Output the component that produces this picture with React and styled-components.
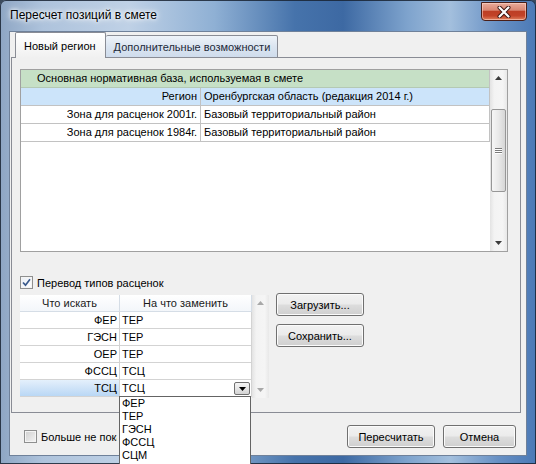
import React from "react";
import styled, { createGlobalStyle } from "styled-components";

const GlobalStyle = createGlobalStyle`
  html, body {
    margin: 0;
    padding: 0;
  }
  body {
    width: 536px;
    height: 464px;
    overflow: hidden;
    font-family: "Liberation Sans", Arial, sans-serif;
    background: #3b4a5c;
  }
`;

const Window = styled.div`
  width: 536px;
  height: 464px;
  box-sizing: border-box;
  display: flex;
  flex-direction: column;
  padding: 0 9px 8px 9px;
  border-radius: 6px 6px 0 0;
  background: linear-gradient(
    90deg,
    #8ea6c4 0%,
    #aec3dc 8%,
    #bfd1e6 24%,
    #8fb0d4 40%,
    #4673ab 55%,
    #3d69a3 64%,
    #7ea3cd 76%,
    #a3bfdd 84%,
    #6790c4 93%,
    #4b79b6 100%
  );
  box-shadow: inset 0 0 0 1px rgba(25, 35, 50, 0.85);
`;

const TitleBar = styled.div`
  height: 31px;
  display: flex;
  align-items: flex-start;
  justify-content: space-between;
  padding-left: 1px;
`;

const Title = styled.div`
  margin-top: 8px;
  font-size: 12px;
  color: #000;
  text-shadow: 0 0 8px #fff, 0 0 5px #fff, 0 0 3px #e8f0fa;
`;

const CloseButton = styled.div`
  width: 46px;
  height: 19px;
  margin-top: 2px;
  box-sizing: border-box;
  border: 1px solid #4a1f18;
  border-radius: 0 0 4px 4px;
  background: linear-gradient(
    #e9ab9b 0%,
    #d98672 42%,
    #bd3f25 50%,
    #c24328 75%,
    #e0825f 100%
  );
  box-shadow: inset 0 0 0 1px rgba(255, 220, 210, 0.55);
  display: flex;
  align-items: center;
  justify-content: center;
`;

const Client = styled.div`
  flex: 1;
  display: flex;
  flex-direction: column;
  background: #f0f0f0;
  border: 1px solid #6f819a;
`;

const TabStrip = styled.div`
  height: 26px;
  display: flex;
  align-items: flex-end;
  padding-left: 4px;
  margin: 0 5px -1px 1px;
  position: relative;
  z-index: 1;
`;

const Tab = styled.div`
  box-sizing: border-box;
  height: ${(p) => (p.$active ? 26 : 23)}px;
  padding: ${(p) => (p.$active ? "6px 9px 0 8px" : "4px 7px 0 8px")};
  border: 1px solid #898c95;
  border-bottom: ${(p) => (p.$active ? "none" : "1px solid #898c95")};
  border-left: ${(p) => (p.$active ? "1px solid #898c95" : "none")};
  border-radius: 2px 2px 0 0;
  background: ${(p) =>
    p.$active
      ? "linear-gradient(#ffffff, #f7f7f7 60%, #f0f0f0)"
      : "linear-gradient(#eef3f9, #dbe5f1 50%, #cfdcec)"};
  font-size: 11px;
  line-height: 14px;
  color: ${(p) => (p.$active ? "#000" : "#1e2a3a")};
  white-space: nowrap;
`;

const TabPanel = styled.div`
  height: 356px;
  box-sizing: border-box;
  margin: 0 5px 0 1px;
  border: 1px solid #898c95;
  padding: 11px 0 0 8px;
  display: flex;
  flex-direction: column;
  align-items: flex-start;
`;

const BaseGrid = styled.div`
  width: 488px;
  height: 183px;
  box-sizing: border-box;
  border: 1px solid #a0a0a0;
  background: #fff;
  display: flex;
`;

const BaseRows = styled.div`
  flex: 1;
  display: flex;
  flex-direction: column;
  font-size: 11px;
`;

const GroupRow = styled.div`
  height: 18px;
  box-sizing: border-box;
  line-height: 17px;
  padding-left: 16px;
  background: #c6e0c6;
  border-bottom: 1px solid #b4c9b4;
  border-right: 1px solid #c2c2c2;
  white-space: nowrap;
`;

const BaseRow = styled.div`
  height: 18px;
  box-sizing: border-box;
  display: grid;
  grid-template-columns: 180px 1fr;
  background: ${(p) => (p.$hl ? "#cce4fa" : "#fff")};
  border-bottom: 1px solid #c2c2c2;
  border-right: 1px solid #c2c2c2;
`;

const BaseCell = styled.div`
  line-height: 17px;
  padding: 0 3px;
  text-align: ${(p) => (p.$right ? "right" : "left")};
  border-right: ${(p) => (p.$right ? "1px solid #c2c2c2" : "none")};
  white-space: nowrap;
  overflow: hidden;
`;

const VScroll = styled.div`
  width: 17px;
  display: flex;
  flex-direction: column;
  background: linear-gradient(90deg, #e3e3e3, #f3f3f3 25%, #f5f5f5 75%, #e8e8e8);
`;

const ArrowBox = styled.div`
  height: 17px;
  display: flex;
  align-items: center;
  justify-content: center;
`;

const Track = styled.div`
  flex: 1;
  display: flex;
  flex-direction: column;
`;

const Thumb = styled.div`
  margin: 22px 1px 0 1px;
  height: 83px;
  box-sizing: border-box;
  border: 1px solid #979797;
  border-radius: 2px;
  background: linear-gradient(90deg, #f6f6f6, #e9e9e9 50%, #d6d6d6);
  display: flex;
  flex-direction: column;
  align-items: center;
  justify-content: center;
  gap: 1px;
`;

const Grip = styled.span`
  width: 7px;
  height: 1px;
  background: #7a7a7a;
  box-shadow: 0 1px 0 #fff;
`;

const CheckRow = styled.label`
  display: flex;
  align-items: center;
  gap: 4px;
  margin-top: ${(p) => p.$mt || 0}px;
  font-size: 11px;
  white-space: nowrap;
`;

const LabelText = styled.span`
  max-width: ${(p) => (p.$clip ? `${p.$clip}px` : "none")};
  overflow: hidden;
`;

const Box = styled.span`
  width: 13px;
  height: 13px;
  box-sizing: border-box;
  border: 1px solid #8e8f8f;
  background: ${(p) =>
    p.$checked
      ? "linear-gradient(135deg, #e9eef5, #ffffff)"
      : "linear-gradient(135deg, #cfcfcf, #f4f4f4)"};
  box-shadow: inset 0 0 0 1px #f4f4f4;
  display: flex;
  align-items: center;
  justify-content: center;
  flex: none;
`;

const TypesRow = styled.div`
  display: flex;
  align-items: flex-start;
  gap: 7px;
  margin-top: 6px;
`;

const TypesGrid = styled.div`
  width: 249px;
  height: 103px;
  display: flex;
  background: #f0f0f0;
  font-size: 11px;
`;

const TypesTable = styled.div`
  width: 232px;
  display: flex;
  flex-direction: column;
`;

const TypesHead = styled.div`
  height: 16px;
  display: grid;
  grid-template-columns: 100px 1fr;
  background: linear-gradient(#ffffff, #f3f6fa);
  border-bottom: 1px solid #d5dde6;
`;

const HeadCell = styled.div`
  line-height: 16px;
  text-align: center;
  color: #1a1a1a;
  border-right: 1px solid #d5dde6;
`;

const TypesLine = styled.div`
  height: 17px;
  box-sizing: border-box;
  display: grid;
  grid-template-columns: 100px 1fr;
  border-bottom: 1px solid #d3d3d3;
  background: #fff;
`;

const FromCell = styled.div`
  line-height: 16px;
  text-align: right;
  padding-right: 2px;
  border-right: 1px solid #d3d3d3;
  background: ${(p) =>
    p.$sel ? "linear-gradient(#e4f0fc, #cfe3f8 50%, #b9d7f5)" : "#fff"};
`;

const ToCell = styled.div`
  position: relative;
  line-height: 16px;
  padding-left: 2px;
  display: flex;
  align-items: center;
  justify-content: space-between;
  border-right: 1px solid #d3d3d3;
`;

const ComboButton = styled.span`
  width: 16px;
  height: 13px;
  margin-right: 1px;
  box-sizing: border-box;
  border: 1px solid #707070;
  border-radius: 2px;
  background: linear-gradient(#f4f4f4, #e6e6e6 50%, #d3d3d3);
  display: flex;
  align-items: center;
  justify-content: center;
`;

const DropList = styled.div`
  position: absolute;
  top: 100%;
  left: -1px;
  width: 132px;
  height: 72px;
  box-sizing: border-box;
  border: 1px solid #646464;
  border-bottom: none;
  background: #fff;
  z-index: 10;
`;

const DropItem = styled.div`
  height: 13px;
  line-height: 13px;
  padding-left: 2px;
  font-size: 11px;
  color: #000;
`;

const SideButtons = styled.div`
  display: flex;
  flex-direction: column;
  gap: 8px;
  margin-top: -2px;
`;

const Button = styled.button`
  width: ${(p) => p.$w}px;
  height: 23px;
  box-sizing: border-box;
  padding: 0;
  border: 1px solid #707070;
  border-radius: 3px;
  background: linear-gradient(#f2f2f2 0%, #ebebeb 48%, #dddddd 52%, #cfcfcf 100%);
  box-shadow: inset 0 0 0 1px #fbfbfb;
  font-family: "Liberation Sans", Arial, sans-serif;
  font-size: 11px;
  color: #000;
`;

const BottomBar = styled.div`
  flex: 1;
  display: flex;
  align-items: flex-start;
  padding: 12px 10px 0 14px;
`;

const Spacer = styled.div`
  flex: 1;
`;

const FooterButtons = styled.div`
  display: flex;
  gap: 8px;
`;

const Arrow = ({ down, color = "#3c3c3c" }) => (
  <svg width="7" height="5" viewBox="0 0 7 5">
    {down ? (
      <path d="M0 1 H7 L3.5 5 Z" fill={color} />
    ) : (
      <path d="M0 4 H7 L3.5 0 Z" fill={color} />
    )}
  </svg>
);

const CheckMark = () => (
  <svg width="9" height="9" viewBox="0 0 9 9">
    <path d="M1 4.5 L3.5 7.2 L8 1.2" fill="none" stroke="#3a5a8c" strokeWidth="1.7" />
  </svg>
);

const baseRows = [
  ["Зона для расценок 2001г.", "Базовый территориальный район"],
  ["Зона для расценок 1984г.", "Базовый территориальный район"],
];

const typeRows = [
  ["ФЕР", "ТЕР"],
  ["ГЭСН", "ТЕР"],
  ["ОЕР", "ТЕР"],
  ["ФССЦ", "ТСЦ"],
];

const dropItems = ["ФЕР", "ТЕР", "ГЭСН", "ФССЦ", "СЦМ"];

const App = () => {
  return (
    <>
      <GlobalStyle />
      <Window>
        <TitleBar>
          <Title>Пересчет позиций в смете</Title>
          <CloseButton>
            <svg width="14" height="12" viewBox="0 0 14 12">
              <path
                d="M2.5 1.5 L11.5 10.5 M11.5 1.5 L2.5 10.5"
                stroke="#3a1410"
                strokeWidth="4"
                strokeLinecap="round"
              />
              <path
                d="M2.5 1.5 L11.5 10.5 M11.5 1.5 L2.5 10.5"
                stroke="#fff"
                strokeWidth="2.2"
                strokeLinecap="round"
              />
            </svg>
          </CloseButton>
        </TitleBar>
        <Client>
          <TabStrip>
            <Tab $active>Новый регион</Tab>
            <Tab>Дополнительные возможности</Tab>
          </TabStrip>
          <TabPanel>
            <BaseGrid>
              <BaseRows>
                <GroupRow>Основная нормативная база, используемая в смете</GroupRow>
                <BaseRow $hl>
                  <BaseCell $right>Регион</BaseCell>
                  <BaseCell>Оренбургская область (редакция 2014 г.)</BaseCell>
                </BaseRow>
                {baseRows.map(([a, b]) => (
                  <BaseRow key={a}>
                    <BaseCell $right>{a}</BaseCell>
                    <BaseCell>{b}</BaseCell>
                  </BaseRow>
                ))}
              </BaseRows>
              <VScroll>
                <ArrowBox>
                  <Arrow />
                </ArrowBox>
                <Track>
                  <Thumb>
                    <Grip />
                    <Grip />
                    <Grip />
                  </Thumb>
                </Track>
                <ArrowBox>
                  <Arrow down />
                </ArrowBox>
              </VScroll>
            </BaseGrid>

            <CheckRow $mt={24}>
              <Box $checked>
                <CheckMark />
              </Box>
              Перевод типов расценок
            </CheckRow>

            <TypesRow>
              <TypesGrid>
                <TypesTable>
                  <TypesHead>
                    <HeadCell>Что искать</HeadCell>
                    <HeadCell>На что заменить</HeadCell>
                  </TypesHead>
                  {typeRows.map(([a, b]) => (
                    <TypesLine key={a}>
                      <FromCell>{a}</FromCell>
                      <ToCell>{b}</ToCell>
                    </TypesLine>
                  ))}
                  <TypesLine>
                    <FromCell $sel>ТСЦ</FromCell>
                    <ToCell>
                      ТСЦ
                      <ComboButton>
                        <Arrow down color="#000" />
                      </ComboButton>
                      <DropList>
                        {dropItems.map((d) => (
                          <DropItem key={d}>{d}</DropItem>
                        ))}
                      </DropList>
                    </ToCell>
                  </TypesLine>
                </TypesTable>
                <VScroll>
                  <ArrowBox>
                    <Arrow color="#a8a8a8" />
                  </ArrowBox>
                  <Track />
                  <ArrowBox>
                    <Arrow down color="#a8a8a8" />
                  </ArrowBox>
                </VScroll>
              </TypesGrid>
              <SideButtons>
                <Button $w={88}>Загрузить...</Button>
                <Button $w={88}>Сохранить...</Button>
              </SideButtons>
            </TypesRow>
          </TabPanel>
          <BottomBar>
            <CheckRow $mt={5}>
              <Box />
              <LabelText $clip={76}>Больше не показывать</LabelText>
            </CheckRow>
            <Spacer />
            <FooterButtons>
              <Button $w={88}>Пересчитать</Button>
              <Button $w={73}>Отмена</Button>
            </FooterButtons>
          </BottomBar>
        </Client>
      </Window>
    </>
  );
};

export default App;
